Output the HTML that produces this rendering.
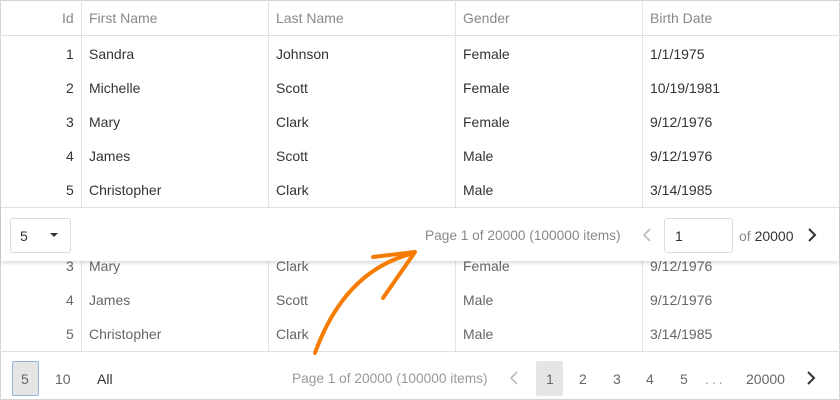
<!DOCTYPE html>
<html><head><style>
*{margin:0;padding:0;box-sizing:border-box}
body{width:840px;height:400px;background:#fff;font-family:"Liberation Sans",sans-serif;font-size:14px;color:#333;position:relative;overflow:hidden}
.t{position:absolute;white-space:nowrap;line-height:16px}
.v{position:absolute;width:1px;background:#e4e4e4}
.h{position:absolute;height:1px;background:#e0e0e0}
.g{color:#666}
.p{font-size:13.7px}
</style></head><body>
<div style="position:absolute;left:0;top:0;width:840px;height:400px;border:1px solid #d4d4d4"></div>
<div class="h" style="left:0;top:35px;width:840px;background:#ddd"></div>
<div class="v" style="left:81px;top:0;height:351px"></div>
<div class="v" style="left:268px;top:0;height:351px"></div>
<div class="v" style="left:455px;top:0;height:351px"></div>
<div class="v" style="left:642px;top:0;height:351px"></div>
<div class="t" style="left:62px;top:10px;color:#888">Id</div>
<div class="t" style="left:89px;top:10px;color:#888">First Name</div>
<div class="t" style="left:276px;top:10px;color:#888">Last Name</div>
<div class="t" style="left:463px;top:10px;color:#888">Gender</div>
<div class="t" style="left:650px;top:10px;color:#888">Birth Date</div>
<div class="t" style="left:66px;top:46px">1</div><div class="t" style="left:89px;top:46px">Sandra</div><div class="t" style="left:276px;top:46px">Johnson</div><div class="t" style="left:463px;top:46px">Female</div><div class="t" style="left:650px;top:46px">1/1/1975</div>
<div class="t" style="left:66px;top:80px">2</div><div class="t" style="left:89px;top:80px">Michelle</div><div class="t" style="left:276px;top:80px">Scott</div><div class="t" style="left:463px;top:80px">Female</div><div class="t" style="left:650px;top:80px">10/19/1981</div>
<div class="t" style="left:66px;top:114px">3</div><div class="t" style="left:89px;top:114px">Mary</div><div class="t" style="left:276px;top:114px">Clark</div><div class="t" style="left:463px;top:114px">Female</div><div class="t" style="left:650px;top:114px">9/12/1976</div>
<div class="t" style="left:66px;top:148px">4</div><div class="t" style="left:89px;top:148px">James</div><div class="t" style="left:276px;top:148px">Scott</div><div class="t" style="left:463px;top:148px">Male</div><div class="t" style="left:650px;top:148px">9/12/1976</div>
<div class="t" style="left:66px;top:182px">5</div><div class="t" style="left:89px;top:182px">Christopher</div><div class="t" style="left:276px;top:182px">Clark</div><div class="t" style="left:463px;top:182px">Male</div><div class="t" style="left:650px;top:182px">3/14/1985</div>
<div class="t g" style="left:66px;top:258px">3</div><div class="t g" style="left:89px;top:258px">Mary</div><div class="t g" style="left:276px;top:258px">Clark</div><div class="t g" style="left:463px;top:258px">Female</div><div class="t g" style="left:650px;top:258px">9/12/1976</div>
<div class="t g" style="left:66px;top:292px">4</div><div class="t g" style="left:89px;top:292px">James</div><div class="t g" style="left:276px;top:292px">Scott</div><div class="t g" style="left:463px;top:292px">Male</div><div class="t g" style="left:650px;top:292px">9/12/1976</div>
<div class="t g" style="left:66px;top:326px">5</div><div class="t g" style="left:89px;top:326px">Christopher</div><div class="t g" style="left:276px;top:326px">Clark</div><div class="t g" style="left:463px;top:326px">Male</div><div class="t g" style="left:650px;top:326px">3/14/1985</div>
<div style="position:absolute;left:1px;top:207px;width:838px;height:54px;background:#fff;border-top:1px solid #e0e0e0;box-shadow:0 2px 4px rgba(0,0,0,.15)">
 <div style="position:absolute;left:9px;top:10px;width:61px;height:35px;border:1px solid #dcdcdc;border-radius:3px"></div>
 <div class="t" style="left:19px;top:20px">5</div>
 <div style="position:absolute;left:49px;top:25px;border-left:4px solid transparent;border-right:4px solid transparent;border-top:4px solid #333"></div>
 <div class="t p" style="left:424px;top:20px;color:#888">Page 1 of 20000 (100000 items)</div>
 <svg style="position:absolute;left:640px;top:19px" width="12" height="16"><path d="M9 2 L3 8 L9 14" fill="none" stroke="#bbb" stroke-width="1.6"/></svg>
 <div style="position:absolute;left:663px;top:10px;width:69px;height:35px;border:1px solid #dcdcdc;border-radius:3px"></div>
 <div class="t" style="left:674px;top:20px">1</div>
 <div class="t" style="left:738px;top:20px"><span style="color:#888">of</span> 20000</div>
 <svg style="position:absolute;left:805px;top:19px" width="12" height="16"><path d="M3 2 L9 8 L3 14" fill="none" stroke="#333" stroke-width="2"/></svg>
</div>
<div class="h" style="left:0;top:351px;width:840px"></div>
<div style="position:absolute;left:12px;top:361px;width:27px;height:35px;border:1px solid #8fb4de;background:#e5e5e5;border-radius:2px"></div>
<div class="t g" style="left:21px;top:371px">5</div>
<div class="t g" style="left:55px;top:371px">10</div>
<div class="t" style="left:97px;top:371px">All</div>
<div class="t p" style="left:292px;top:371px;color:#999">Page 1 of 20000 (100000 items)</div>
<svg style="position:absolute;left:508px;top:370px" width="12" height="16"><path d="M9 2 L3 8 L9 14" fill="none" stroke="#bbb" stroke-width="1.6"/></svg>
<div style="position:absolute;left:536px;top:361px;width:27px;height:35px;background:#e5e5e5;border-radius:2px"></div>
<div class="t g" style="left:546px;top:371px">1</div>
<div class="t g" style="left:579px;top:371px">2</div>
<div class="t g" style="left:613px;top:371px">3</div>
<div class="t g" style="left:646px;top:371px">4</div>
<div class="t g" style="left:680px;top:371px">5</div>
<div class="t" style="left:705px;top:371px;color:#999;letter-spacing:3px">...</div>
<div class="t g" style="left:746px;top:371px">20000</div>
<svg style="position:absolute;left:805px;top:370px" width="12" height="16"><path d="M3 2 L9 8 L3 14" fill="none" stroke="#333" stroke-width="2"/></svg>
<svg style="position:absolute;left:0;top:0" width="840" height="400">
<path d="M315 353 Q345 270 414 253" fill="none" stroke="#f57c00" stroke-width="4" stroke-linecap="round"/>
<path d="M373 257 L415 252 L383 298" fill="none" stroke="#f57c00" stroke-width="4" stroke-linecap="round" stroke-linejoin="round"/>
</svg>
</body></html>
